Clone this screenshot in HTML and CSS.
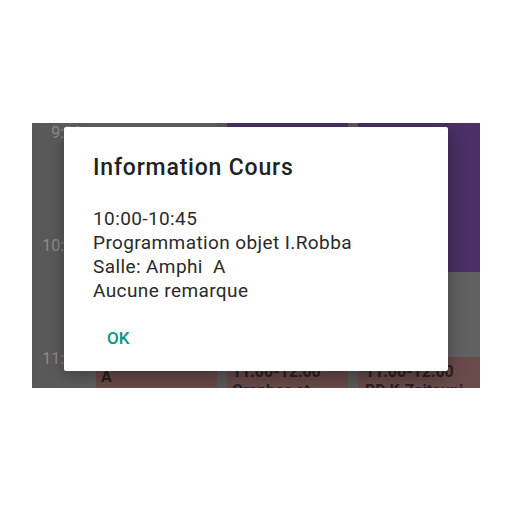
FILE: index.html
```html
<!DOCTYPE html>
<html lang="fr">
<head>
<meta charset="utf-8">
<title>Information Cours</title>
<link rel="stylesheet" href="styles.css">
</head>
<body>
<div class="screen">
  <div class="calendar">
    <div class="times">
      <div class="hour"><span class="label">9:00</span></div>
      <div class="hour"><span class="label">10:00</span></div>
      <div class="hour"><span class="label">11:00</span></div>
    </div>
    <div class="days">
      <div class="day">
        <div class="free free-a"></div>
        <div class="event brown ev-a">
          <div class="ev-line">11:00-12:00</div>
          <div class="ev-line">Anglais</div>
          <div class="ev-line">Salle: Amphi</div>
          <div class="ev-line">A</div>
        </div>
      </div>
      <div class="day">
        <div class="event purple ev-b"></div>
        <div class="free free-b"></div>
        <div class="event brown">
          <div class="ev-line">11:00-12:00</div>
          <div class="ev-line">Graphes et</div>
        </div>
      </div>
      <div class="day">
        <div class="event purple ev-c"></div>
        <div class="free free-c"></div>
        <div class="event brown ev-pad">
          <div class="ev-line">11:00-12:00</div>
          <div class="ev-line">BD K.Zeitouni</div>
        </div>
      </div>
    </div>
  </div>

  <div class="dialog" role="dialog">
    <h1 class="dialog-title">Information Cours</h1>
    <div class="dialog-body">
      <p>10:00-10:45</p>
      <p>Programmation objet I.Robba</p>
      <p>Salle: Amphi&nbsp; A</p>
      <p>Aucune remarque</p>
    </div>
    <div class="dialog-actions">
      <button class="btn-ok" type="button">OK</button>
    </div>
  </div>
</div>
</body>
</html>
```

FILE: styles.css
```css
* { box-sizing: border-box; }

html, body {
  margin: 0;
  padding: 0;
  background: #ffffff;
}

body {
  font-family: Roboto, "Noto Sans", "Liberation Sans", sans-serif;
}

.screen {
  position: relative;
  width: 448px;
  height: 265px;
  margin: 123px 0 0 32px;
  overflow: hidden;
  background: #5d5d5d;
}

.calendar {
  display: grid;
  grid-template-columns: 64px 1fr;
  height: 100%;
}

.times {
  display: flex;
  flex-direction: column;
  margin-top: 0;
  background: linear-gradient(to right, #575757, #626262);
}

.hour {
  height: 113px;
  flex: none;
  text-align: right;
  padding-right: 14px;
}

.label {
  display: block;
  font-size: 16px;
  line-height: 20px;
  color: #8c8c8c;
}

.days {
  display: grid;
  grid-template-columns: 121px 121px 122px;
  column-gap: 10px;
  background: #5b5b5b;
}

.day {
  display: flex;
  flex-direction: column;
  background: #616161;
  overflow: hidden;
}

.free { flex: none; }
.free-a { height: 234px; }
.free-b { height: 122px; }
.free-c { height: 85px; }

.event {
  flex: none;
  padding: 5px 5px 0;
  font-size: 16px;
  font-weight: 700;
  line-height: 19px;
  color: #2b2020;
}

.purple { background: #4a3066; }
.brown { background: #6a4b4b; flex: 1; }

.ev-b { height: 112px; }
.ev-c { height: 149px; }
.ev-a { margin-top: -47px; padding-top: 0; }
.ev-pad { padding-left: 7px; }

.ev-line { white-space: nowrap; }

.dialog {
  position: absolute;
  left: 32px;
  top: 4px;
  width: 384px;
  height: 244px;
  background: #ffffff;
  border-radius: 2px;
  box-shadow: 0 6px 18px rgba(0, 0, 0, 0.35);
  padding: 27px 29px 0;
  display: flex;
  flex-direction: column;
}

.dialog-title {
  margin: 0;
  font-size: 23px;
  font-weight: 500;
  letter-spacing: 0.8px;
  line-height: 27px;
  color: #212121;
}

.dialog-body {
  margin-top: 26px;
  font-size: 19px;
  letter-spacing: 0.4px;
  line-height: 24px;
  color: #2a2a2a;
}

.dialog-body p { margin: 0; white-space: pre; }

.dialog-actions {
  margin-top: 25px;
  display: flex;
}

.btn-ok {
  border: none;
  background: none;
  padding: 0;
  margin-left: 14px;
  font-family: inherit;
  font-size: 17px;
  font-weight: 500;
  line-height: 20px;
  color: #009688;
  cursor: pointer;
}
```
